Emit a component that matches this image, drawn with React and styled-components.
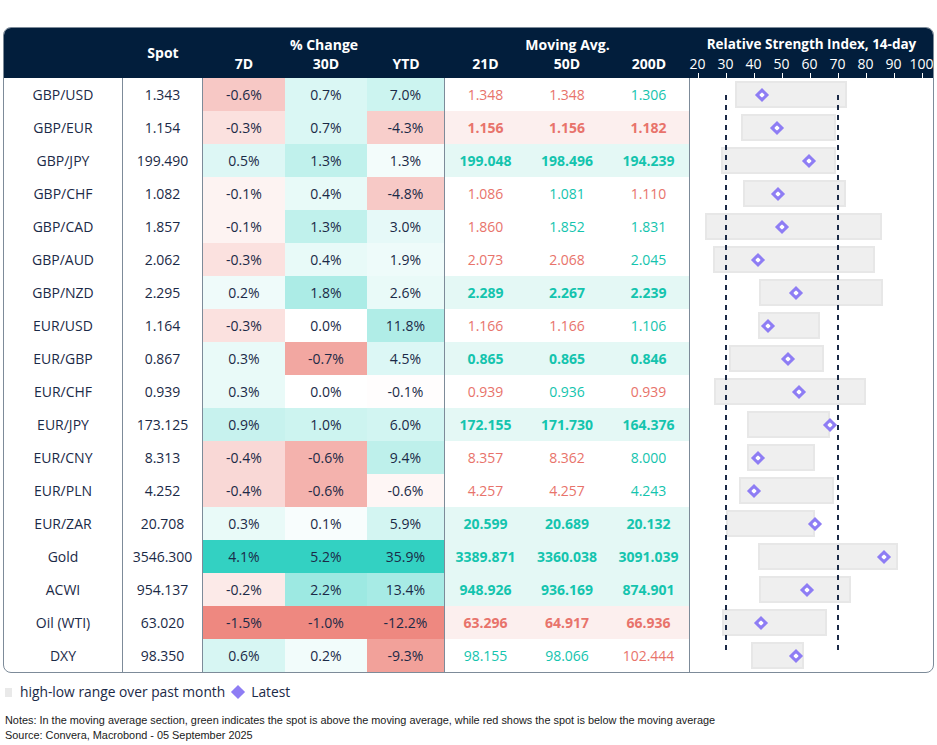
import React from "react";
import styled, { createGlobalStyle } from "styled-components";

//
// FX dashboard table: spot, % change heat map, moving averages and RSI ranges.
//

const NAVY = "#021e3c";
const INK = "#1b2a47";
const LINE = "#7d8b99";
const RED = "#e8736b";
const GREEN = "#14c4ae";
const COLS = "119px 80px 82px 82px 78px 81px 82px 82px";

let rows = [
  { name: "GBP/USD", spot: "1.343", ch: [-0.6, 0.7, 7.0], ma: ["1.348", "1.348", "1.306"], sig: "rrg", rsi: [33.4, 73.3, 43.1] },
  { name: "GBP/EUR", spot: "1.154", ch: [-0.3, 0.7, -4.3], ma: ["1.156", "1.156", "1.182"], sig: "rrr", rsi: [35.4, 69.4, 48.3] },
  { name: "GBP/JPY", spot: "199.490", ch: [0.5, 1.3, 1.3], ma: ["199.048", "198.496", "194.239"], sig: "ggg", rsi: [28.4, 69.4, 59.9] },
  { name: "GBP/CHF", spot: "1.082", ch: [-0.1, 0.4, -4.8], ma: ["1.086", "1.081", "1.110"], sig: "rgr", rsi: [36.1, 72.9, 48.9] },
  { name: "GBP/CAD", spot: "1.857", ch: [-0.1, 1.3, 3.0], ma: ["1.860", "1.852", "1.831"], sig: "rgg", rsi: [22.7, 85.9, 50.3] },
  { name: "GBP/AUD", spot: "2.062", ch: [-0.3, 0.4, 1.9], ma: ["2.073", "2.068", "2.045"], sig: "rrg", rsi: [25.5, 83.3, 41.5] },
  { name: "GBP/NZD", spot: "2.295", ch: [0.2, 1.8, 2.6], ma: ["2.289", "2.267", "2.239"], sig: "ggg", rsi: [42.0, 86.3, 55.2] },
  { name: "EUR/USD", spot: "1.164", ch: [-0.3, 0.0, 11.8], ma: ["1.166", "1.166", "1.106"], sig: "rrg", rsi: [41.6, 63.6, 45.1] },
  { name: "EUR/GBP", spot: "0.867", ch: [0.3, -0.7, 4.5], ma: ["0.865", "0.865", "0.846"], sig: "ggg", rsi: [31.3, 65.2, 52.2] },
  { name: "EUR/CHF", spot: "0.939", ch: [0.3, 0.0, -0.1], ma: ["0.939", "0.936", "0.939"], sig: "rgr", rsi: [25.9, 80.2, 56.4] },
  { name: "EUR/JPY", spot: "173.125", ch: [0.9, 1.0, 6.0], ma: ["172.155", "171.730", "164.376"], sig: "ggg", rsi: [37.8, 67.2, 67.3] },
  { name: "EUR/CNY", spot: "8.313", ch: [-0.4, -0.6, 9.4], ma: ["8.357", "8.362", "8.000"], sig: "rrg", rsi: [37.8, 62.0, 41.7] },
  { name: "EUR/PLN", spot: "4.252", ch: [-0.4, -0.6, -0.6], ma: ["4.257", "4.257", "4.243"], sig: "rrg", rsi: [34.8, 68.6, 40.2] },
  { name: "EUR/ZAR", spot: "20.708", ch: [0.3, 0.1, 5.9], ma: ["20.599", "20.689", "20.132"], sig: "ggg", rsi: [30.2, 62.1, 61.9] },
  { name: "Gold", spot: "3546.300", ch: [4.1, 5.2, 35.9], ma: ["3389.871", "3360.038", "3091.039"], sig: "ggg", rsi: [41.6, 91.5, 86.7] },
  { name: "ACWI", spot: "954.137", ch: [-0.2, 2.2, 13.4], ma: ["948.926", "936.169", "874.901"], sig: "ggg", rsi: [42.0, 74.7, 59.1] },
  { name: "Oil (WTI)", spot: "63.020", ch: [-1.5, -1.0, -12.2], ma: ["63.296", "64.917", "66.936"], sig: "rrr", rsi: [28.8, 66.1, 42.6] },
  { name: "DXY", spot: "98.350", ch: [0.6, 0.2, -9.3], ma: ["98.155", "98.066", "102.444"], sig: "ggr", rsi: [39.1, 58.0, 55.1] },
];

// extremes per % change column, used to scale the heat colours
const extremes = [
  [4.1, -1.5],
  [5.2, -1.0],
  [35.9, -12.2],
];

function mix(a, t) {
  let c = a.map((v) => Math.round(255 - (255 - v) * t));
  return `rgb(${c[0]}, ${c[1]}, ${c[2]})`;
}
function heat(v, col) {
  let [max, min] = extremes[col];
  if (v === 0) return "#ffffff";
  if (v > 0) return mix([51, 209, 194], Math.pow(v / max, 0.85));
  return mix([238, 136, 128], Math.pow(v / min, 0.85));
}
// RSI value -> x inside the RSI column
let rx = (v) => 7.5 + (v - 20) * 2.8;

const GlobalStyle = createGlobalStyle`
  body {
    margin: 0;
    background: #ffffff;
    font-family: "Open Sans", "Noto Sans", sans-serif;
    color: ${INK};
  }
`;

let Page = styled.div`
  padding: 27px 0 0 3px;
  width: 931px;
`;
let Card = styled.div`
  border: 1px solid ${LINE};
  border-radius: 8px;
  overflow: hidden;
`;
let Header = styled.div`
  display: grid;
  grid-template-columns: ${COLS} 1fr;
  grid-template-rows: 19px 19px;
  padding: 7px 0 5px;
  background: ${NAVY};
  color: #ffffff;
  font-weight: 700;
  font-size: 14px;
  line-height: 19px;
`;
let HeadCell = styled.div`
  display: flex;
  align-items: center;
  justify-content: center;
  grid-column: ${({ $col }) => $col};
  grid-row: ${({ $row }) => $row};
  font-size: ${({ $size }) => $size || "14px"};
  padding-bottom: ${({ $lift }) => $lift || 0};
`;
let Axis = styled.div`
  grid-column: 9;
  grid-row: 2;
  position: relative;
`;
let AxisLabel = styled.span`
  position: absolute;
  top: 0;
  transform: translateX(-50%);
  font-weight: 400;
  font-size: 14px;
`;
let Tick = styled.span`
  position: absolute;
  top: 19px;
  width: 1px;
  height: 5px;
  background: #ffffff;
`;

let Body = styled.div`
  display: flex;
`;
let Table = styled.div`
  display: grid;
  grid-template-columns: ${COLS};
  grid-auto-rows: 33px;
  font-size: 14px;
`;
let Cell = styled.div`
  display: flex;
  align-items: center;
  justify-content: center;
  box-sizing: border-box;
  border-right: ${({ $divide }) => ($divide ? `1px solid ${LINE}` : "none")};
  background: ${({ $bg }) => $bg || "transparent"};
  color: ${({ $color }) => $color || INK};
  font-weight: ${({ $bold }) => ($bold ? 700 : 400)};
`;

let RsiPanel = styled.div`
  flex: 1;
  position: relative;
`;
let RsiRow = styled.div`
  position: relative;
  height: 33px;
`;
let Bar = styled.div`
  position: absolute;
  top: 3px;
  height: 27px;
  box-sizing: border-box;
  background: #efefef;
  border: 2px solid #e7e7e7;
`;
let Diamond = styled.div`
  position: absolute;
  top: 11.5px;
  width: 10px;
  height: 10px;
  margin-left: -5px;
  background: #8e7df4;
  transform: rotate(45deg);
  z-index: 2;
  &::after {
    content: "";
    position: absolute;
    left: 3px;
    top: 3px;
    width: 4px;
    height: 4px;
    border-radius: 1px;
    background: #ffffff;
  }
`;
let Dashed = styled.div`
  position: absolute;
  top: 17px;
  bottom: 20px;
  width: 2px;
  background: repeating-linear-gradient(to bottom, ${INK} 0 5px, transparent 5px 10px);
  z-index: 1;
`;

let Legend = styled.div`
  display: flex;
  align-items: center;
  margin: 11px 0 0 2px;
  font-size: 13.8px;
  line-height: 16px;
  color: ${INK};
`;
let RangeKey = styled.span`
  width: 7px;
  height: 9px;
  background: #e9e9e9;
  margin-right: 8px;
`;
let LatestKey = styled.span`
  width: 10px;
  height: 10px;
  background: #8e7df4;
  transform: rotate(45deg);
  margin: 0 8px 0 8px;
`;
let Notes = styled.div`
  margin: 13px 0 0 2px;
  font-family: "Liberation Sans", Arial, sans-serif;
  font-size: 10.9px;
  line-height: 15px;
  color: #1a1a1a;
`;

export default function App() {
  return (
    <Page>
      <GlobalStyle />
      <Card>
        <Header>
          <HeadCell $col="1" $row="1 / span 2" />
          <HeadCell $col="2" $row="1 / span 2" $lift="3px">Spot</HeadCell>
          <HeadCell $col="3 / span 3" $row="1">% Change</HeadCell>
          <HeadCell $col="3" $row="2">7D</HeadCell>
          <HeadCell $col="4" $row="2">30D</HeadCell>
          <HeadCell $col="5" $row="2">YTD</HeadCell>
          <HeadCell $col="6 / span 3" $row="1">Moving Avg.</HeadCell>
          <HeadCell $col="6" $row="2">21D</HeadCell>
          <HeadCell $col="7" $row="2">50D</HeadCell>
          <HeadCell $col="8" $row="2">200D</HeadCell>
          <HeadCell $col="9" $row="1" $size="13.5px">
            Relative Strength Index, 14-day
          </HeadCell>
          <Axis>
            {[20, 30, 40, 50, 60, 70, 80, 90, 100].map((v) => (
              <React.Fragment key={v}>
                <AxisLabel style={{ left: rx(v) }}>{v}</AxisLabel>
                <Tick style={{ left: rx(v) }} />
              </React.Fragment>
            ))}
          </Axis>
        </Header>
        <Body>
          <Table>
            {rows.map((r) => {
              let bold = r.sig === "ggg" || r.sig === "rrr";
              let maBg = !bold ? null : r.sig === "ggg" ? "#e4f8f5" : "#fcefee";
              return (
                <React.Fragment key={r.name}>
                  <Cell $divide>{r.name}</Cell>
                  <Cell $divide>{r.spot}</Cell>
                  {r.ch.map((v, i) => (
                    <Cell key={i} $bg={heat(v, i)} $divide={i === 2}>
                      {v.toFixed(1)}%
                    </Cell>
                  ))}
                  {r.ma.map((m, i) => (
                    <Cell
                      key={"m" + i}
                      $bg={maBg}
                      $bold={bold}
                      $color={r.sig[i] === "g" ? GREEN : RED}
                      $divide={i === 2}
                    >
                      {m}
                    </Cell>
                  ))}
                </React.Fragment>
              );
            })}
          </Table>
          <RsiPanel>
            {rows.map((r) => (
              <RsiRow key={r.name}>
                <Bar style={{ left: rx(r.rsi[0]), width: rx(r.rsi[1]) - rx(r.rsi[0]) }} />
                <Diamond style={{ left: rx(r.rsi[2]) }} />
              </RsiRow>
            ))}
            <Dashed style={{ left: rx(30) - 1 }} />
            <Dashed style={{ left: rx(70) - 1 }} />
          </RsiPanel>
        </Body>
      </Card>
      <Legend>
        <RangeKey />
        high-low range over past month
        <LatestKey />
        Latest
      </Legend>
      <Notes>
        Notes: In the moving average section, green indicates the spot is above the moving average, while red shows the
        spot is below the moving average
        <br />
        Source: Convera, Macrobond - 05 September 2025
      </Notes>
    </Page>
  );
}
